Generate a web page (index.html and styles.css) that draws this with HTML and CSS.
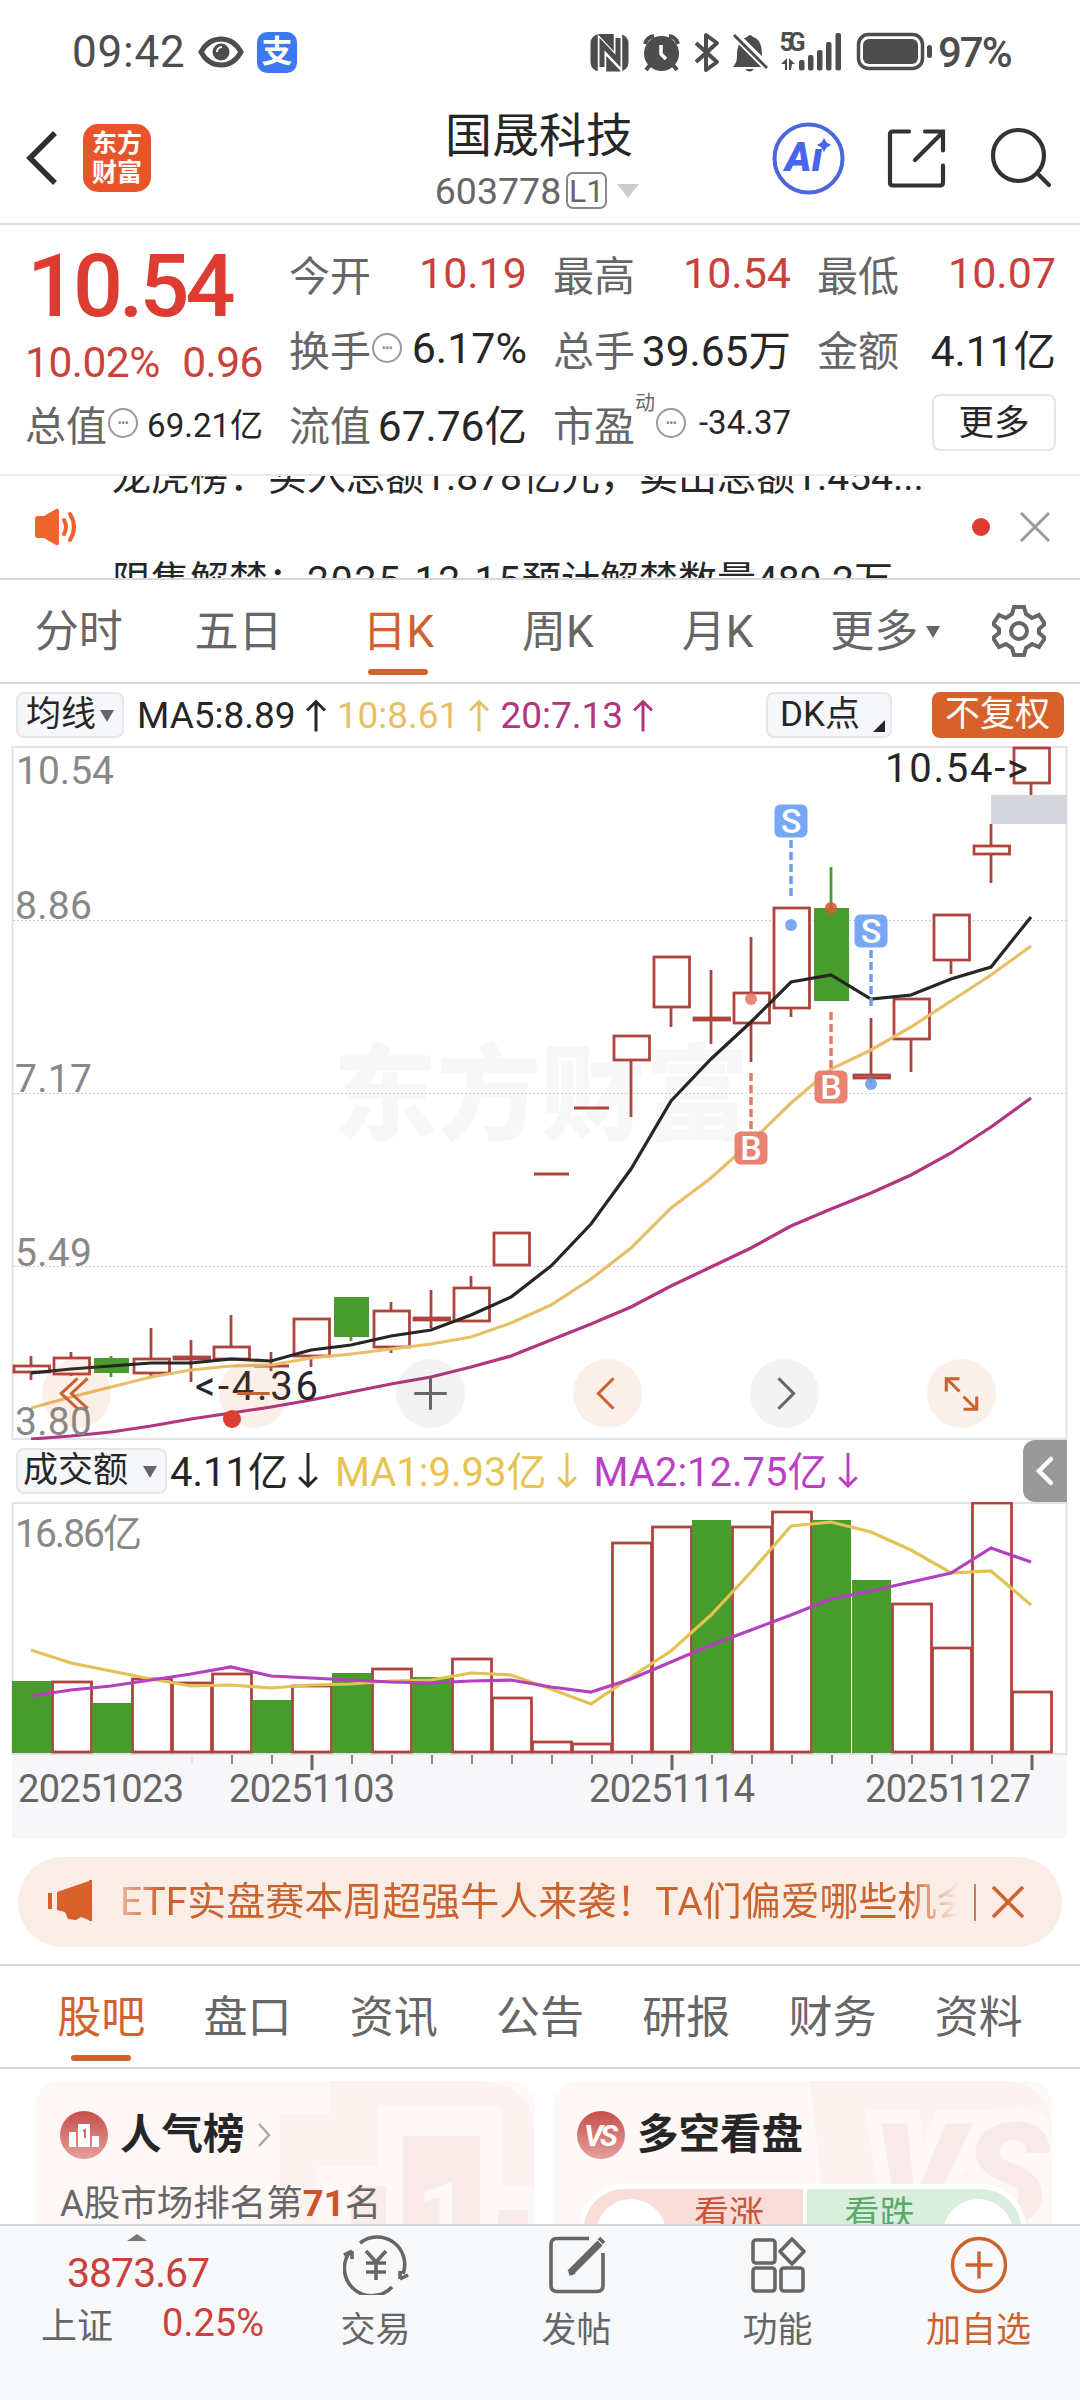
FILE: index.html
```html
<!DOCTYPE html>
<html lang="zh-CN">
<head>
  <meta charset="UTF-8" />
  <title>国晟科技 603778</title>
  <meta name="viewport" content="width=device-width, initial-scale=1.0" />
  <link rel="stylesheet" href="styles.css">
</head>
<body>
  <div class="status">
    <span class="clock">09:42</span>
    <svg class="eye" width="46" height="32" viewBox="0 0 46 32">
      <path d="M3 16C8 7 15 3 23 3s15 4 20 13c-5 9-12 13-20 13S8 25 3 16z" fill="none" stroke="#4d4d4d" stroke-width="5"/>
      <circle cx="23" cy="16" r="8.5" fill="#4d4d4d"/>
      <path d="M19 16a5 5 0 0 1 5-5" fill="none" stroke="#fff" stroke-width="2"/>
    </svg>
    <span class="alipay">支</span>
    <svg class="status-icons" width="350" height="44" viewBox="586 29 350 44" fill="#4d4d4d">
      <rect x="590.500" y="33" width="38" height="37.500" rx="9"/>
      <path d="M602 71V44l16 17V32" fill="none" stroke="#fff" stroke-width="8.500"/>
      <path d="M602 66V43l16 17V37" fill="none" stroke="#4d4d4d" stroke-width="5"/>
      <circle cx="661.500" cy="52.500" r="17.500"/>
      <path d="M645 43q2-7 9-8M678 43q-2-7-9-8M650 64l-4 5M673 64l4 5" fill="none" stroke="#4d4d4d" stroke-width="4"/>
      <path d="M661 44v9l5 5" fill="none" stroke="#fff" stroke-width="3.500"/>
      <path d="M696 42l21 19-11 8V34l11 8-21 19" fill="none" stroke="#4d4d4d" stroke-width="4" stroke-linejoin="round"/>
      <path d="M733 66c3-4 4-6 4-12 0-9 4-17 10-18q3-4 6 0c7 2 9 9 9 18 0 6 2 9 5 12zM745 68h9q-4 5-9 0z"/>
      <path d="M735 34l33 33" stroke="#fff" stroke-width="8"/>
      <path d="M734 34l33 33" stroke="#4d4d4d" stroke-width="3"/>
      <text x="779.500" y="50" class="net" textLength="26">5G</text>
      <path d="M781 63l6-6v12h-2v-6zM789 57l6 6h-3l-1 6h-2z"/>
      <rect x="799" y="59" width="5.500" height="10.500" rx="2"/>
      <rect x="808" y="54" width="5.500" height="15.500" rx="2"/>
      <rect x="817" y="49" width="5.500" height="20.500" rx="2"/>
      <rect x="826" y="41" width="5.500" height="28.500" rx="2"/>
      <rect x="835.500" y="32" width="5.500" height="37.500" rx="2"/>
      <rect x="858.500" y="33.500" width="64" height="34" rx="10" fill="none" stroke="#4d4d4d" stroke-width="3.500"/>
      <rect x="863" y="38" width="55" height="25" rx="6"/>
      <rect x="927" y="44" width="5" height="13" rx="2.500"/>
    </svg>
    <span class="battery">97%</span>
  </div>

  <header class="nav">
    <svg class="back" width="36" height="60" viewBox="0 0 36 60"><path d="M30 5L5 30l25 25" fill="none" stroke="#303030" stroke-width="5.500"/></svg>
    <div class="logo"><span>东方</span><span>财富</span></div>
    <div class="stock">
      <h1>国晟科技</h1>
      <div class="code">603778<i>L1</i><b></b></div>
    </div>
    <svg class="nav-icons" width="290" height="80" viewBox="765 117 290 80" fill="none">
      <circle cx="808.500" cy="157.500" r="34" stroke="#4a67dc" stroke-width="4"/>
      <text x="785" y="170" class="ai">Aı</text>
      <path d="M824 137l2.500 4.500 4.500 2.500-4.500 2.500-2.500 4.500-2.500-4.500-4.500-2.500 4.500-2.500z" fill="#4665f0"/>
      <g stroke="#333" stroke-width="4.200" stroke-linecap="round">
        <path d="M909 130.500h-16q-3 0-3 3v48q0 3 3 3h47q3 0 3-3v-17M925 130.500h18v19M942 132l-27 27"/>
        <circle cx="1018.500" cy="154.500" r="25.500"/>
        <path d="M1038 173l11 11"/>
      </g>
    </svg>
  </header>

  <section class="quote">
    <div class="col">
      <div class="price">10.54</div>
      <div class="change"><span>10.02%</span><span>0.96</span></div>
      <div class="cell small"><label>总值</label><em>•••</em><span>69.21亿</span></div>
    </div>
    <div class="col">
      <div class="cell up"><label>今开</label><span>10.19</span></div>
      <div class="cell"><label>换手</label><em>•••</em><span class="pct">6.17%</span></div>
      <div class="cell"><label>流值</label><span>67.76亿</span></div>
    </div>
    <div class="col">
      <div class="cell up"><label>最高</label><span>10.54</span></div>
      <div class="cell"><label>总手</label><span>39.65万</span></div>
      <div class="cell small"><label>市盈</label><sup>动</sup><em>•••</em><span>-34.37</span></div>
    </div>
    <div class="col">
      <div class="cell up"><label>最低</label><span>10.07</span></div>
      <div class="cell"><label>金额</label><span>4.11亿</span></div>
      <div class="cell"><button class="more">更多</button></div>
    </div>
  </section>

  <section class="notice">
    <svg width="48" height="40" viewBox="0 0 48 40">
      <path d="M3 12q0-3 3-3h6L24 2q3-1 3 2v32q0 3-3 2l-12-7H6q-3 0-3-3z" fill="#ee642b"/>
      <path d="M32 13q4 7 0 14M38 7q8 13 0 26" fill="none" stroke="#ee642b" stroke-width="4" stroke-linecap="round"/>
    </svg>
    <div class="ticker">
      <p>龙虎榜：买入总额1.878亿元，卖出总额1.454...</p>
      <p class="second">限售解禁：<span>2025-12-15</span>预计解禁数量489.2万</p>
    </div>
    <i class="dot"></i>
    <svg width="32" height="32" viewBox="0 0 32 32"><path d="M2 2l28 28M30 2L2 30" stroke="#999" stroke-width="3"/></svg>
  </section>

  <nav class="periods">
    <a>分时</a><a>五日</a><a class="on">日K</a><a>周K</a><a>月K</a><a class="drop">更多<i></i></a>
    <svg width="54" height="54" viewBox="-27 -27 54 54" fill="none" stroke="#666" stroke-width="4">
      <path d="M-5-24H5l2 7 6 4 7-3 6 9-6 5v4l6 5-6 9-7-3-6 4-2 7H-5l-2-7-6-4-7 3-6-9 6-5v-4l-6-5 6-9 7 3 6-4z"/>
      <circle r="8"/>
    </svg>
  </nav>

  <div class="ma-row">
    <button class="tag ma-tag">均线<i class="tri"></i></button>
    <span class="ma black">MA5:8.89<svg class="arrow" viewBox="0 0 20 34"><path d="M10 33V3M1 12l9-9 9 9"/></svg></span>
    <span class="ma gold">10:8.61<svg class="arrow" viewBox="0 0 20 34"><path d="M10 33V3M1 12l9-9 9 9"/></svg></span>
    <span class="ma plum">20:7.13<svg class="arrow" viewBox="0 0 20 34"><path d="M10 33V3M1 12l9-9 9 9"/></svg></span>
    <button class="tag dk">DK点<i class="corner"></i></button>
    <button class="tag fq">不复权</button>
  </div>

  <div class="kline">
    <svg id="kline" width="1080" height="700" viewBox="0 740 1080 700"></svg>
    <div class="controls">
      <span class="ctl"><svg viewBox="0 0 68 68"><path d="M35 19L19 34l16 15M45 19L29 34l16 15"/></svg></span>
      <span class="ctl"><svg viewBox="0 0 68 68"><path d="M18 34h32"/></svg></span>
      <span class="ctl gray"><svg viewBox="0 0 68 68"><path d="M18 34h32M34 17v33"/></svg></span>
      <span class="ctl"><svg viewBox="0 0 68 68"><path d="M40 19L25 34l15 15"/></svg></span>
      <span class="ctl gray"><svg viewBox="0 0 68 68"><path d="M28 19l15 15-15 15"/></svg></span>
      <span class="ctl"><svg viewBox="0 0 68 68"><path d="M32 19.500H19V32M19 19l13 13M36 49.500h13V37M49 50L36 37"/></svg></span>
    </div>
  </div>

  <div class="vol-row">
    <button class="tag vol-tag">成交额<i class="tri"></i></button>
    <span class="vol black">4.11亿<svg class="arrow" viewBox="0 0 20 36"><path d="M10 0v34M1 25l9 9 9-9"/></svg></span>
    <span class="vol yellow">MA1:9.93亿<svg class="arrow" viewBox="0 0 20 36"><path d="M10 0v34M1 25l9 9 9-9"/></svg></span>
    <span class="vol purple">MA2:12.75亿<svg class="arrow" viewBox="0 0 20 36"><path d="M10 0v34M1 25l9 9 9-9"/></svg></span>
    <span class="toggle"><svg width="20" height="32" viewBox="0 0 20 32"><path d="M16 4L4 16l12 12" fill="none" stroke="#fff" stroke-width="4.500" stroke-linecap="round"/></svg></span>
  </div>
  <svg id="volume" width="1080" height="337" viewBox="0 1502 1080 337"></svg>

  <div class="banner">
    <svg width="50" height="44" viewBox="0 0 50 44" fill="#d8602a"><path d="M2 13h4v16H2zM11 12L43 1v39l-8-3-5 3-8-1-3-7-8-2z"/><path d="M43 0h3v41h-3z"/></svg>
    <p>ETF实盘赛本周超强牛人来袭！TA们偏爱哪些机会</p>
    <i></i>
    <svg width="34" height="34" viewBox="0 0 34 34"><path d="M2 2l30 30M32 2L2 32" stroke="#d0622f" stroke-width="3.500"/></svg>
  </div>

  <nav class="sections">
    <a class="on">股吧</a><a>盘口</a><a>资讯</a><a>公告</a><a>研报</a><a>财务</a><a>资料</a>
  </nav>

  <main class="cards">
    <div class="card">
      <svg class="deco" width="260" height="146" viewBox="0 0 260 146">
        <path d="M5 33h50V0h144q60 0 60 50v96H5z" fill="#fcf3f1"/>
        <path d="M41 85h62V25h123v80h33v41H41z" fill="#fdf7f5"/>
        <path d="M76 105h35v41H76zM128 55h77v91h-77zM223 129h30v17h-30z" fill="#f9ebe9"/>
        <text x="142" y="166">1</text>
      </svg>
      <h2>
        <svg width="48" height="48" viewBox="0 0 48 48"><circle cx="24" cy="24" r="24" fill="url(#red)"/><path d="M9 21h7v15H9zM18 13h12v23H18zM32 25h7v11h-7z" fill="#fff"/><path d="M23 20l2-1v8" stroke="#ce6963" stroke-width="2" fill="none"/></svg>
        人气榜
        <svg class="go" width="16" height="26" viewBox="0 0 16 26"><path d="M2 2l10 11L2 24" fill="none" stroke="#aaa" stroke-width="2.500"/></svg>
      </h2>
      <p>A股市场排名第<b>71</b>名</p>
    </div>
    <div class="card">
      <svg class="deco" width="260" height="146" viewBox="0 0 260 146">
        <path d="M18 0h190q51 0 51 50v96H34z" fill="#fcf2f0"/>
        <text x="80" y="144" class="vs-bg">VS</text>
      </svg>
      <h2>
        <svg width="48" height="48" viewBox="0 0 48 48">
          <defs><linearGradient id="red" x1="0" y1="0" x2="0" y2="1"><stop offset="0" stop-color="#c74f49"/><stop offset="1" stop-color="#e5a09c"/></linearGradient></defs>
          <circle cx="24" cy="24" r="24" fill="url(#red)"/><text x="7" y="35" class="vs">VS</text>
        </svg>
        多空看盘
      </h2>
      <div class="vote">
        <span class="bull"><i></i>看涨</span>
        <span class="bear">看跌<i></i></span>
      </div>
    </div>
  </main>

  <footer class="tabbar">
    <div class="index">
      <i></i>
      <strong>3873.67</strong>
      <div><span>上证</span><span class="up">0.25%</span></div>
    </div>
    <a>
      <svg width="66" height="60" viewBox="-33 -30 66 60" fill="none" stroke="#666" stroke-width="3.600">
        <path d="M-16-22A27.500 27.500 0 0 1 27 9M16 22A27.500 27.500 0 0 1-27-12M24 14v-8M24 14l8-4M-24-14v8M-24-14l-8 4M-10-14L0-3l10-11M0-3v18M-10-2h20M-10 7h20"/>
      </svg>交易
    </a>
    <a>
      <svg width="66" height="60" viewBox="-33 -30 66 60" fill="none" stroke="#666" stroke-width="3.600">
        <path d="M12-26.500h-32q-6 0-6 6v41q0 6 6 6h40q6 0 6-6V-12"/><path d="M-7 8L23-22" stroke-width="7"/><path d="M-8 9l6-2M22-27l5 5"/>
      </svg>发帖
    </a>
    <a>
      <svg width="66" height="60" viewBox="-33 -30 66 60" fill="none" stroke="#666" stroke-width="3.600">
        <rect x="-25" y="-25" width="22" height="23" rx="3"/><rect x="-25" y="3" width="22" height="23" rx="3"/><rect x="3" y="3" width="22" height="23" rx="3"/><path d="M14-26l12 12.500L14-1 2-13.500z" stroke-linejoin="round"/>
      </svg>功能
    </a>
    <a class="add">
      <svg width="66" height="60" viewBox="-33 -30 66 60" fill="none" stroke="#cb632f" stroke-width="3.400">
        <circle r="26.500"/><path d="M-13.500 0h27M0-13.500v27"/>
      </svg>加自选
    </a>
  </footer>

  <script src="chart.js"></script>
</body>
</html>
```
FILE: styles.css
```css
* {
  box-sizing: border-box;
}

body {
  margin: 0;
  width: 1080px;
  height: 2400px;
  overflow: hidden;
  background: #fff;
  color: #262626;
  font-family: Roboto, "Noto Sans CJK SC", sans-serif;
  display: flex;
  flex-direction: column;
}

body > * {
  flex: none;
}

svg {
  display: block;
  flex: none;
}

i, em {
  font-style: normal;
}

p, h1, h2 {
  margin: 0;
}

button {
  font-family: inherit;
  padding: 0;
}

/* status bar */
.status {
  height: 100px;
  padding: 4px 68px 0 72px;
  display: flex;
  align-items: center;
  color: #4d4d4d;
}

.clock {
  font-size: 44px;
  letter-spacing: 0.8px;
  width: 126px;
}

.alipay {
  width: 40px;
  height: 41px;
  margin-left: 13px;
  border-radius: 10px;
  background: #3c78f0;
  color: #fff;
  font-size: 31px;
  font-weight: bold;
  line-height: 40px;
  text-align: center;
}

.status-icons {
  margin-left: auto;
}

.net {
  font-size: 25px;
  font-weight: bold;
}

.battery {
  font-size: 42px;
  font-weight: 500;
  letter-spacing: -2px;
  width: 74px;
  margin-left: 2px;
}

/* title bar */
.nav {
  height: 125px;
  border-bottom: 2px solid #d9d9d9;
  padding: 0 25px 8px;
  display: flex;
  align-items: center;
}

.logo {
  width: 68px;
  height: 68px;
  margin-left: 22px;
  border-radius: 15px;
  background: #e9552a;
  color: #fff;
  font-size: 25px;
  font-weight: bold;
  line-height: 29px;
  display: flex;
  flex-direction: column;
  align-items: center;
  justify-content: center;
}

.stock {
  width: 300px;
  margin: 5px auto 0 236px;
  display: flex;
  flex-direction: column;
  align-items: center;
}

.stock h1 {
  margin: 0 0 3px 4px;
  font-size: 47px;
  font-weight: normal;
  line-height: 58px;
}

.code {
  display: flex;
  align-items: center;
  height: 46px;
  font-size: 37.5px;
  color: #666;
}

.code i {
  width: 41px;
  height: 37px;
  margin-left: 5px;
  border: 2px solid #888;
  border-radius: 7px;
  font-size: 32px;
  line-height: 34px;
  text-align: center;
}

.code b {
  margin-left: 10px;
  border: 11px solid transparent;
  border-top: 14px solid #ccc;
  border-bottom: 0;
}

.ai {
  fill: #4665f0;
  font-size: 40px;
  font-weight: 900;
  font-style: italic;
}

/* quote figures */
.quote {
  height: 249px;
  padding: 10px 24px 0 25px;
  display: grid;
  grid-template-columns: 238px 238px 238px 239px;
  column-gap: 26px;
}

.cell {
  height: 75px;
  display: flex;
  align-items: center;
  white-space: nowrap;
  font-size: 42.5px;
}

.cell label {
  font-size: 41px;
  color: #666;
}

.cell span {
  margin-left: auto;
}

.cell .pct {
  font-size: 43px;
}

.cell.up span {
  font-size: 43px;
  color: #c9413a;
}

.cell.small span {
  font-size: 33px;
}

.cell em {
  width: 30px;
  height: 30px;
  margin-left: 1px;
  border: 2px solid #999;
  border-radius: 50%;
  color: #888;
  font-size: 12px;
  line-height: 26px;
  letter-spacing: -0.5px;
  text-align: center;
}

.cell sup {
  font-size: 20px;
  color: #666;
  line-height: 20px;
  margin-top: -40px;
}

.cell sup + em {
  margin-left: 1px;
}

.price {
  height: 100px;
  padding-left: 2px;
  font-size: 88px;
  font-weight: 500;
  line-height: 101px;
  letter-spacing: -4px;
  color: #de3b32;
}

.change {
  height: 50px;
  display: flex;
  justify-content: space-between;
  align-items: center;
  font-size: 42.5px;
  letter-spacing: -0.5px;
  color: #cb423b;
  padding-top: 4px;
}

.more {
  width: 124px;
  height: 57px;
  margin-left: auto;
  border: 2px solid #e6e6e6;
  border-radius: 8px;
  background: #fff;
  color: #262626;
  font-size: 35.5px;
  line-height: 50px;
}

/* scrolling notice */
.notice {
  height: 106px;
  border-top: 2px solid #ebebeb;
  border-bottom: 2px solid #d9d9d9;
  padding: 0 29px 0 32px;
  display: flex;
  align-items: center;
}

.ticker {
  align-self: stretch;
  width: 860px;
  margin-left: 32px;
  overflow: hidden;
  font-size: 39px;
  line-height: 50px;
  white-space: nowrap;
}

.ticker p {
  margin-top: -24px;
}

.ticker .second {
  margin-top: 54px;
}

.ticker .second span {
  letter-spacing: 1.8px;
}

.dot {
  width: 18px;
  height: 18px;
  margin: 0 29px 0 auto;
  border-radius: 50%;
  background: #de3b32;
}

/* tabs */
.periods {
  height: 104px;
  margin-left: -1px;
  border-bottom: 2px solid #d9d9d9;
  display: grid;
  grid-template-columns: repeat(6, 159.7px) 1fr;
  align-items: center;
  justify-items: center;
}

.periods a, .sections a {
  position: relative;
  height: 102px;
  line-height: 104px;
  font-size: 44px;
  color: #666;
  white-space: nowrap;
}

.periods .on, .sections .on {
  color: #d0622f;
}

.on::after {
  content: "";
  position: absolute;
  left: 50%;
  bottom: 7px;
  width: 60px;
  height: 6px;
  margin-left: -30px;
  border-radius: 3px;
  background: #d0622f;
}

.drop i {
  position: absolute;
  right: -22px;
  top: 46px;
  border: 7.5px solid transparent;
  border-top: 12px solid #666;
  border-bottom: 0;
}

.drop {
  margin-right: 6px;
}

/* indicator rows */
.ma-row, .vol-row {
  display: flex;
  align-items: center;
  white-space: nowrap;
  padding-left: 16px;
}

.ma-row {
  height: 56px;
  padding-top: 6px;
  font-size: 37px;
}

.vol-row {
  height: 62px;
  font-size: 40px;
}

.tag {
  position: relative;
  height: 46px;
  border: 2px solid #e4e6ea;
  border-radius: 8px;
  background: #f6f7fa;
  color: #262626;
  font-size: 35px;
  line-height: 40px;
  text-align: left;
  padding-left: 8px;
}

.tri {
  position: absolute;
  right: 8px;
  top: 16px;
  border: 7px solid transparent;
  border-top: 12px solid #666;
  border-bottom: 0;
}

.ma-tag {
  width: 108px;
}

.vol-tag {
  width: 151px;
  padding-left: 5px;
}

.ma, .vol {
  display: flex;
  align-items: center;
}

.ma {
  margin-left: 13px;
}

.ma + .ma {
  margin-left: 11px;
}

.vol {
  height: 46px;
  margin: -5px 0 0 3px;
}

.vol + .vol {
  margin-left: 17px;
}

.vol .arrow {
  margin-top: 4px;
}

.arrow {
  width: 20px;
  height: 35px;
  margin-left: 10px;
  fill: none;
  stroke: currentColor;
  stroke-width: 3;
}

.black { color: #262626; }
.gold { color: #e8bf67; }
.plum { color: #b3347f; }
.yellow { color: #e7c34f; }
.purple { color: #bd3fc8; }

.dk {
  width: 126px;
  margin-left: auto;
  padding-left: 12px;
}

.corner {
  position: absolute;
  right: 5px;
  bottom: 4px;
  border: 6px solid #262626;
  border-top-color: transparent;
  border-left-color: transparent;
}

.fq {
  width: 132px;
  margin: 0 16px 0 40px;
  border-color: #d8612b;
  background: #d8612b;
  color: #fff;
  padding-left: 11px;
}

.toggle {
  width: 44px;
  height: 62px;
  margin: 0 13px 0 auto;
  border-radius: 12px 0 0 12px;
  background: #999;
  display: flex;
  align-items: center;
  justify-content: center;
}

/* charts */
.kline {
  position: relative;
  height: 700px;
}

.controls {
  position: absolute;
  left: 42px;
  top: 619px;
  width: 954px;
  display: flex;
  justify-content: space-between;
}

.ctl {
  width: 69px;
  height: 69px;
  border-radius: 50%;
  background: rgba(216, 97, 43, 0.1);
}

.ctl svg {
  fill: none;
  stroke: #c9622f;
  stroke-width: 3;
}

.ctl.gray {
  background: rgba(80, 80, 80, 0.07);
}

.ctl.gray svg {
  stroke: #666;
}

.frame { fill: none; stroke: #e2e2e4; stroke-width: 2; }
.grid { stroke: #ccc; stroke-width: 1; stroke-dasharray: 2 2; }
.axis { fill: #888; font-size: 39px; }
.date { fill: #666; font-size: 38px; }
.note { fill: #262626; font-size: 40px; }
.mark { fill: #f7f7f7; font-size: 104px; font-weight: 900; }
.rise { fill: #fff; stroke: #ae443d; stroke-width: 2.8; }
.fall { fill: #489c2c; stroke: #489c2c; stroke-width: 0; }
.wick-rise { stroke: #ae443d; stroke-width: 2.8; }
.wick-fall { stroke: #489c2c; stroke-width: 2.8; }
.line { fill: none; stroke-width: 3.2; }
.badge { fill: #fff; font-size: 34px; font-weight: 500; text-anchor: middle; }

/* promo banner */
.banner {
  height: 90px;
  margin: 18px 18px 17px;
  padding: 0 37px 0 28px;
  border-radius: 45px;
  background: #faede6;
  color: #cb632f;
  display: flex;
  align-items: center;
}

.banner p {
  width: 838px;
  margin-left: 24px;
  overflow: hidden;
  font-size: 39px;
  line-height: 60px;
  white-space: nowrap;
  -webkit-mask-image: linear-gradient(90deg, rgba(0,0,0,.4), #000 5%, #000 94%, transparent);
  mask-image: linear-gradient(90deg, rgba(0,0,0,.4), #000 5%, #000 94%, transparent);
}

.banner i {
  width: 2px;
  height: 37px;
  margin: 0 15px 0 auto;
  background: #cb7a52;
}

.sections {
  height: 105px;
  border-top: 2px solid #d9d9d9;
  border-bottom: 2px solid #d9d9d9;
  padding: 0 28px;
  display: grid;
  grid-template-columns: repeat(7, 1fr);
  justify-items: center;
}

/* cards */
.cards {
  height: 155px;
  padding: 12px 28px 0 36px;
  display: grid;
  grid-template-columns: 499px 499px;
  column-gap: 18px;
  overflow: hidden;
}

.card {
  position: relative;
  height: 200px;
  border-radius: 24px 24px 0 0;
  background: #fef8f6;
  padding: 30px 25px 0 24px;
}

.deco {
  position: absolute;
  right: 0;
  top: 0;
  fill: #fdf7f5;
  font-size: 90px;
  font-weight: bold;
}

.vs-bg {
  font-size: 142px;
  font-style: italic;
  font-weight: 900;
  fill: #f9ebe9;
  stroke: #fdf7f5;
  stroke-width: 28px;
  paint-order: stroke;
}

.vs {
  fill: #fff;
  font-size: 30px;
  font-style: italic;
  font-weight: bold;
  letter-spacing: -3px;
}

.card h2 {
  position: relative;
  height: 48px;
  display: flex;
  align-items: center;
  gap: 12px;
  font-size: 41.5px;
  line-height: 48px;
}

.card p {
  position: relative;
  margin-top: 18px;
  font-size: 36.5px;
  line-height: 54px;
  color: #666;
}

.card p b {
  color: #ce5328;
}

.vote {
  position: relative;
  height: 90px;
  margin: 25px 0 0 2px;
  width: 447px;
  border: 5px solid #fff;
  border-radius: 48px;
  display: flex;
  overflow: hidden;
  font-size: 35px;
  line-height: 44px;
}

.vote span {
  width: 50%;
  display: flex;
  gap: 28px;
}

.vote i {
  width: 70px;
  height: 70px;
  margin-top: 6px;
  border-radius: 50%;
  background: #fff;
}

.bull {
  background: #f8ddd9;
  color: #cb5535;
  padding-left: 12px;
}

.bear {
  background: #daeedd;
  color: #5aab66;
  padding-left: 38px;
  border-left: 4px solid #fff;
}

.vote .bull, .vote .bear {
  padding-top: 4px;
}

/* bottom bar */
.tabbar {
  height: 177px;
  border-top: 2px solid #d6d7da;
  background: #f7f8fa;
  display: grid;
  grid-template-columns: 275px repeat(4, 201px);
}

.tabbar a {
  padding-top: 9px;
  display: flex;
  flex-direction: column;
  align-items: center;
  font-size: 35px;
  line-height: 72px;
  color: #666;
}

.tabbar .add {
  color: #cb632f;
}

.index {
  padding: 8px 11px 0 41px;
  font-size: 36px;
  color: #666;
}

.index i {
  display: block;
  width: 0;
  margin-left: 86px;
  border: 10px solid transparent;
  border-bottom: 7px solid #777;
  border-top: 0;
}

.index strong {
  display: block;
  margin: 7px 0 0 26px;
  font-size: 41px;
  font-weight: normal;
  line-height: 50px;
  letter-spacing: -1px;
  color: #c9413a;
}

.index div {
  display: flex;
  justify-content: space-between;
  align-items: center;
  height: 50px;
}

.index .up {
  font-size: 38px;
  color: #c9413a;
}
```
FILE: chart.js
```js
const STEP = 40;
const X0 = 31;

// [body top, body bottom, wick top, wick bottom, falling]
const candles = [
  [1366, 1372, 1356, 1380], [1358, 1374, 1352, 1376], [1358, 1373, 1356, 1377, 1],
  [1359, 1373, 1328, 1376], [1357, 1359, 1340, 1382], [1347, 1359, 1315, 1359],
  [1366, 1366, 1352, 1371], [1319, 1356, 1319, 1367], [1297, 1337, 1297, 1341, 1],
  [1311, 1347, 1302, 1353], [1318, 1320, 1290, 1328], [1288, 1321, 1276, 1321],
  [1233, 1265, 1233, 1265], [1174, 1174, 1174, 1174], [1108, 1108, 1108, 1108],
  [1036, 1060, 1036, 1117], [957, 1007, 957, 1027], [1018, 1020, 970, 1044],
  [993, 1023, 937, 1062], [908, 1008, 908, 1017], [908, 1001, 867, 1001, 1],
  [1075, 1078, 1018, 1083], [999, 1039, 999, 1072], [915, 960, 915, 974],
  [846, 854, 824, 883], [748, 783, 748, 795]
];
const ma5 = [1373, 1369, 1366, 1363, 1363, 1359, 1361, 1350, 1345, 1336, 1330, 1315, 1297, 1266, 1224, 1169, 1101, 1059, 1022, 982, 975, 999, 995, 979, 967, 917];
const ma10 = [1408, 1397, 1387, 1377, 1370, 1366, 1365, 1358, 1354, 1349, 1344, 1337, 1323, 1305, 1279, 1248, 1208, 1178, 1142, 1103, 1069, 1050, 1027, 1001, 975, 946];
const ma20 = [1439, 1436, 1432, 1426, 1419, 1413, 1407, 1400, 1392, 1384, 1377, 1367, 1356, 1340, 1324, 1307, 1286, 1267, 1248, 1226, 1209, 1193, 1175, 1153, 1127, 1098];

const bars = [1681, 1682, 1703, 1679, 1683, 1674, 1700, 1686, 1673, 1669, 1677, 1659, 1698, 1742, 1744, 1543, 1527, 1520, 1527, 1512, 1520, 1580, 1604, 1648, 1503, 1692];
const fallBars = [0, 2, 6, 8, 10, 17, 20, 21];
const volMa1 = [1650, 1663, 1671, 1679, 1686, 1685, 1688, 1685, 1684, 1681, 1680, 1673, 1675, 1689, 1704, 1677, 1651, 1615, 1572, 1526, 1522, 1532, 1550, 1573, 1571, 1605];
const volMa2 = [1696, 1690, 1686, 1680, 1674, 1667, 1676, 1678, 1680, 1682, 1683, 1681, 1680, 1687, 1692, 1679, 1662, 1645, 1630, 1615, 1599, 1591, 1582, 1573, 1548, 1562];

function x(i) {
  return X0 + i * STEP;
}

function line(data, color) {
  const pts = data.map((y, i) => x(i) + "," + y).join(" ");
  return `<polyline class="line" stroke="${color}" points="${pts}"/>`;
}

function text(cls, tx, ty, width, str) {
  return `<text class="${cls}" x="${tx}" y="${ty}" textLength="${width}">${str}</text>`;
}

function badge(letter, i, y, color, from, to) {
  return `<line x1="${x(i)}" x2="${x(i)}" y1="${from}" y2="${to}" stroke="${color}" stroke-width="3.5" stroke-dasharray="8 4"/>
    <rect x="${x(i) - 16.5}" y="${y - 16.5}" width="33" height="33" rx="6" fill="${color}" fill-opacity=".92"/>
    <text class="badge" x="${x(i)}" y="${y + 12}">${letter}</text>`;
}

function dot(i, y, color) {
  return `<circle cx="${x(i)}" cy="${y}" r="6" fill="${color}" fill-opacity=".9"/>`;
}

function drawKline() {
  const blue = "#6c9ff2";
  const red = "#e67865";
  let out = text("mark", 333, 1132, 416, "东方财富");
  out += '<path class="frame" d="M12.500 747H1066.500V1439H12.500z"/>';
  for (const y of [920, 1093, 1266]) {
    out += `<line class="grid" x1="13" x2="1067" y1="${y}.500" y2="${y}.500"/>`;
  }
  out += '<rect x="991" y="795" width="76" height="29" fill="#d5d6dc"/>';
  candles.forEach(([top, bottom, high, low, fall], i) => {
    const kind = fall ? "fall" : "rise";
    if (high < low) {
      out += `<line class="wick-${kind}" x1="${x(i)}" x2="${x(i)}" y1="${high}" y2="${low}"/>`;
    }
    if (top === bottom) {
      out += `<line class="wick-${kind}" x1="${x(i) - 17}" x2="${x(i) + 18}" y1="${top}" y2="${top}"/>`;
    } else {
      const w = fall ? 35 : 35.5;
      out += `<rect class="${kind}" x="${x(i) - 17}" y="${top}" width="${w}" height="${bottom - top}"/>`;
    }
  });
  out += line(ma20, "#b3347f") + line(ma10, "#e8bf67") + line(ma5, "#262626");
  out += badge("S", 19, 821, blue, 840, 896) + badge("S", 21, 931, blue, 950, 1006);
  out += badge("B", 18, 1148, red, 1073, 1129) + badge("B", 20, 1087, red, 1012, 1068);
  out += dot(19, 925, blue) + dot(21, 1084, blue) + dot(18, 999, red) + dot(20, 908, "#d95a35");
  out += text("axis", 16, 784, 98, "10.54") + text("axis", 15, 919, 77, "8.86");
  out += text("axis", 15, 1092, 77, "7.17") + text("axis", 15, 1266, 77, "5.49");
  out += text("axis", 15, 1435, 77, "3.80");
  out += text("note", 885, 782, 143, "10.54-&gt;") + text("note", 195, 1400, 123, "&lt;-4.36");
  out += '<circle cx="232" cy="1419" r="9" fill="#de3b32"/>';
  document.getElementById("kline").innerHTML = out;
}

function drawVolume() {
  let out = '<rect x="12" y="1754" width="1055" height="84" fill="#f7f7fa"/>';
  out += '<path class="frame" d="M12.500 1503H1066.500V1754H12.500z"/>';
  bars.forEach((top, i) => {
    if (fallBars.includes(i)) {
      out += `<rect class="fall" x="${x(i) - 19}" y="${top}" width="39" height="${1753 - top}"/>`;
    } else {
      out += `<rect class="rise" x="${x(i) - 18.5}" y="${top}" width="39" height="${1752 - top}"/>`;
    }
  });
  out += line(volMa1, "#e3c255") + line(volMa2, "#b340c0");
  for (let i = 4; i <= 25; i++) {
    const major = [7, 16, 25].includes(i);
    out += `<line x1="${x(i) + 1}" x2="${x(i) + 1}" y1="1755" y2="${major ? 1770 : 1764}" stroke="${i === 4 ? "#e6e6e8" : major ? "#666" : "#888"}" stroke-width="${major ? 3 : 2}"/>`;
  }
  out += text("axis", 15, 1547, 127, "16.86亿");
  out += text("date", 18, 1802, 166, "20251023") + text("date", 229, 1802, 166, "20251103");
  out += text("date", 589, 1802, 166, "20251114") + text("date", 865, 1802, 166, "20251127");
  document.getElementById("volume").innerHTML = out;
}

drawKline();
drawVolume();
```
